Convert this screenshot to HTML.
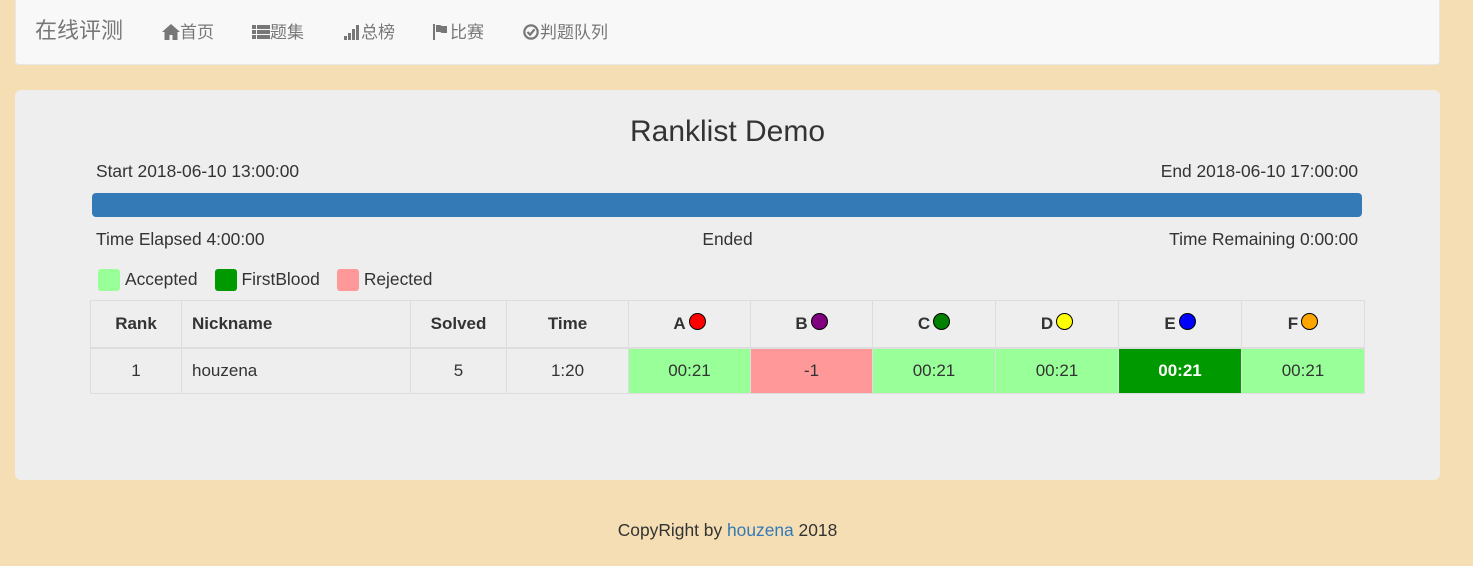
<!DOCTYPE html>
<html><head><meta charset="utf-8"><style>
*{box-sizing:border-box}
body{margin:0;background:#f5deb3;font-family:"Liberation Sans","Noto Sans CJK SC",sans-serif;font-size:17.4px;color:#333;width:1473px;height:566px;overflow:hidden;position:relative}
.nav{position:absolute;left:15px;top:0;width:1425px;height:65px;background:#f8f8f8;border:1px solid #e7e7e7;border-top:none;border-radius:0 0 4px 4px}
.nav span{position:absolute;top:20px;color:#777;font-size:17px;line-height:22px;white-space:nowrap}
.nav svg{vertical-align:-2px;fill:#777}
.brand{font-size:22px!important}
.panel{position:absolute;left:15px;top:90px;width:1425px;height:390px;background:#eee;border-radius:6px}
.a{position:absolute;line-height:20px;white-space:nowrap}
.bar{position:absolute;left:77px;top:103px;width:1270px;height:24px;background:#337ab7;border-radius:4px}
.sq{display:inline-block;width:22px;height:22px;border-radius:3px;vertical-align:middle;margin-right:5px}
table{position:absolute;left:75px;top:210px;border-collapse:collapse;table-layout:fixed}
td,th{border:1px solid #ddd;text-align:center;padding:0;font-size:17px}
th{height:47px;border-bottom:2px solid #ddd}
td{height:46px}
.d{display:inline-block;width:17px;height:17px;border-radius:50%;border:1px solid #000;vertical-align:-1px;margin-left:3px}
.g{background:#9f9}.r{background:#f99}
.foot{position:absolute;top:520px;left:15px;width:1425px;text-align:center;font-size:17.4px}
</style></head><body>
<div class="nav">
<span class="brand" style="left:19px;top:20px">在线评测</span>
<span style="left:146px;top:22px"><svg width="18" height="16" viewBox="0 0 18 16"><path d="M9 0L0 8h2.5v8h5v-5h3v5h5V8H18z"/></svg>首页</span>
<span style="left:236px;top:22px"><svg width="18" height="16" viewBox="0 0 18 16"><rect x="0" y="1" width="4" height="4"/><rect x="5" y="1" width="13" height="4"/><rect x="0" y="6" width="4" height="4"/><rect x="5" y="6" width="13" height="4"/><rect x="0" y="11" width="4" height="4"/><rect x="5" y="11" width="13" height="4"/></svg>题集</span>
<span style="left:327px;top:22px"><svg width="18" height="16" viewBox="0 0 18 16"><rect x="1" y="12" width="3" height="4"/><rect x="5" y="9" width="3" height="7"/><rect x="9" y="5" width="3" height="11"/><rect x="13" y="1" width="3" height="15"/></svg>总榜</span>
<span style="left:417px;top:22px"><svg width="17" height="16" viewBox="0 0 17 16"><rect x="0" y="0" width="2" height="16"/><path d="M3 1h4l2 1h5v7H9L7 8H3z"/></svg>比赛</span>
<span style="left:506px;top:22px"><svg width="18" height="16" viewBox="0 0 18 18"><circle cx="9" cy="9" r="7.5" fill="none" stroke="#777" stroke-width="2.5"/><path d="M5 9l3 3 5-6" fill="none" stroke="#777" stroke-width="2.5"/></svg>判题队列</span>
</div>
<div class="panel">
<div class="a" style="left:0;width:1425px;text-align:center;top:25px;font-size:30px;line-height:34px">Ranklist Demo</div>
<div class="a" style="left:81px;top:71px">Start 2018-06-10 13:00:00</div>
<div class="a" style="right:82px;top:71px">End 2018-06-10 17:00:00</div>
<div class="bar"></div>
<div class="a" style="left:81px;top:139px">Time Elapsed 4:00:00</div>
<div class="a" style="left:0;width:1425px;text-align:center;top:139px">Ended</div>
<div class="a" style="right:82px;top:139px">Time Remaining 0:00:00</div>
<div class="a" style="left:83px;top:178px;line-height:22px"><span class="sq" style="background:#9f9"></span>Accepted<span class="sq" style="background:#090;margin-left:17px"></span>FirstBlood<span class="sq" style="background:#f99;margin-left:17px"></span>Rejected</div>
<table>
<colgroup><col style="width:91px"><col style="width:229px"><col style="width:96px"><col style="width:122px"><col style="width:122px"><col style="width:122px"><col style="width:123px"><col style="width:123px"><col style="width:123px"><col style="width:123px"></colgroup>
<tr><th>Rank</th><th style="text-align:left;padding-left:10px">Nickname</th><th>Solved</th><th>Time</th><th>A<span class="d" style="background:red"></span></th><th>B<span class="d" style="background:purple"></span></th><th>C<span class="d" style="background:green"></span></th><th>D<span class="d" style="background:yellow"></span></th><th>E<span class="d" style="background:blue"></span></th><th>F<span class="d" style="background:orange"></span></th></tr>
<tr><td>1</td><td style="text-align:left;padding-left:10px">houzena</td><td>5</td><td>1:20</td><td class="g">00:21</td><td class="r">-1</td><td class="g">00:21</td><td class="g">00:21</td><td style="background:#090;color:#fff;font-weight:bold">00:21</td><td class="g">00:21</td></tr>
</table>
</div>
<div class="foot">CopyRight by <span style="color:#337ab7">houzena</span> 2018</div>
</body></html>
